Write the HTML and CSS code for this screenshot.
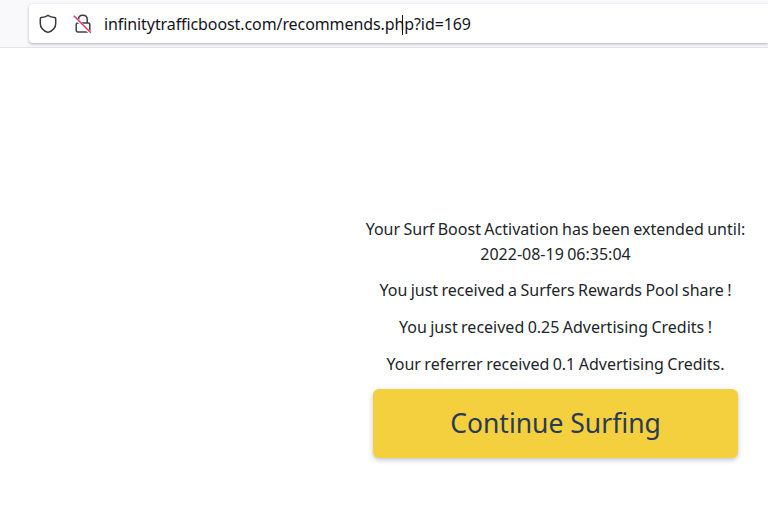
FILE: index.html
```html
<!DOCTYPE html>
<html lang="en">
<head>
<meta charset="utf-8">
<title>Continue Surfing</title>
<link rel="stylesheet" href="styles.css">
</head>
<body>
<header class="toolbar">
  <div class="urlbar">
    <svg class="icon-shield" width="20" height="20" viewBox="0 0 20 20" aria-hidden="true">
      <path d="M10 1.4 C11.8 2.6 14.4 3.4 16.6 3.6 C17.3 3.7 17.7 4.1 17.7 4.8 V9.4 C17.7 13.6 14.6 16.8 10 18.4 C5.4 16.8 2.3 13.6 2.3 9.4 V4.8 C2.3 4.1 2.7 3.7 3.4 3.6 C5.6 3.4 8.2 2.6 10 1.4 Z" fill="none" stroke="#3a3940" stroke-width="1.5" stroke-linejoin="round"/>
    </svg>
    <svg class="icon-lock" width="20" height="20" viewBox="0 0 20 20" aria-hidden="true">
      <path d="M5.5 9 V5.4 C5.5 3 7.2 1.2 9.8 1.2 C12.4 1.2 14.2 3 14.2 5.4 V9" fill="none" stroke="#3f3e46" stroke-width="1.5"/>
      <rect x="3.2" y="9" width="13.6" height="9" rx="1.4" fill="none" stroke="#3f3e46" stroke-width="1.5"/>
      <path d="M0.8 2.6 L17.6 19.2" stroke="#fff" stroke-width="3"/>
      <path d="M0.8 1.8 L17.8 18.8" stroke="#e8305a" stroke-width="1.4"/>
    </svg>
    <span class="url">infinitytrafficboost.com/recommends.ph<span class="caret"></span>p?id=169</span>
  </div>
</header>
<main class="page">
  <section class="panel">
    <p class="msg msg-lead">Your Surf Boost Activation has been extended until:<br>2022-08-19 06:35:04</p>
    <p class="msg">You just received a Surfers Rewards Pool share !</p>
    <p class="msg">You just received 0.25 Advertising Credits !</p>
    <p class="msg">Your referrer received 0.1 Advertising Credits.</p>
    <a class="cta" href="#">Continue Surfing</a>
  </section>
</main>
</body>
</html>
```
FILE: styles.css
```css
* { box-sizing: border-box; }
html, body { margin: 0; height: 100%; overflow: hidden; background: #fff; }
.toolbar {
  height: 48px;
  padding: 4px 0 5px 29px;
  background: #f9f9fb;
  border-bottom: 1px solid #e4e4e6;
}
.urlbar {
  height: 39px;
  display: flex;
  align-items: center;
  padding-left: 9px;
  background: #fff;
  border-radius: 4px 0 0 4px;
  box-shadow: 0 1px 3px rgba(0, 0, 0, 0.3);
}
.icon-shield { margin-right: 15px; flex: none; }
.icon-lock { margin-right: 11px; flex: none; }
.url {
  font: 16px/22px "Noto Sans", sans-serif;
  letter-spacing: -0.09px;
  color: #15141a;
  white-space: nowrap;
}
.caret {
  display: inline-block;
  width: 1px;
  height: 20px;
  margin: 0 1px 0 -2px;
  vertical-align: -5px;
  background: #15141a;
}
.page {
  display: flex;
  justify-content: flex-end;
  padding: 169px 30px 0 0;
}
.panel {
  width: 365px;
  display: flex;
  flex-direction: column;
  align-items: center;
  color: #212529;
  font: 400 16px/25px "Noto Sans", sans-serif;
  word-spacing: -0.75px;
  text-align: center;
}
.msg {
  margin: 0 -20px 12px;
  white-space: nowrap;
}
.msg-lead { margin-bottom: 11px; }
.cta {
  width: 100%;
  height: 69px;
  display: flex;
  align-items: center;
  justify-content: center;
  background: #f4d03f;
  border-radius: 6px;
  box-shadow: 0 2px 5px rgba(50, 60, 90, 0.3);
  color: #2a3a55;
  font-size: 26.5px;
  word-spacing: 0;
  text-decoration: none;
}
```
